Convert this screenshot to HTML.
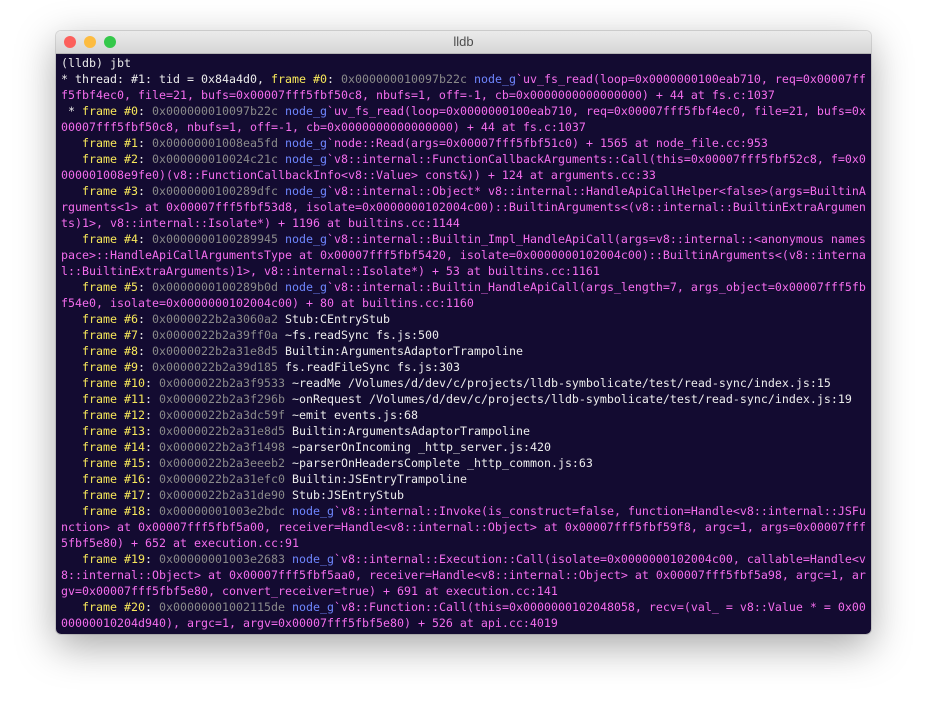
<!DOCTYPE html>
<html><head><meta charset="utf-8"><style>
body{margin:0;width:927px;height:714px;background:#fff;position:relative;overflow:hidden}
.win{position:absolute;left:56px;top:31px;width:815px;height:603px;border-radius:5px;overflow:hidden;box-shadow:0 12px 40px rgba(0,0,0,.35),0 0 0 1px rgba(0,0,0,.12)}
.tb{height:22px;background:linear-gradient(#ebebeb,#d6d6d6);border-bottom:1px solid #b5b5b5;position:relative;font:13px "Liberation Sans",sans-serif;color:#4d4d4d;text-align:center;line-height:22px}
.d{position:absolute;top:5px;width:12px;height:12px;border-radius:50%}
.term{background:#130b31;height:580px;padding:1px 0 0 5px;font:11.63px/16px "DejaVu Sans Mono",monospace;color:#ececec;white-space:pre}
.y{color:#f8e85a}.g{color:#8a8a8a}.b{color:#6f86ff}.p{color:#f46ded}
</style></head><body><div class="win"><div class="tb"><span class="d" style="left:8px;background:#fc605c"></span><span class="d" style="left:28px;background:#fdbc40"></span><span class="d" style="left:48px;background:#34c84a"></span>lldb</div><div class="term">(lldb) jbt
* thread: #1: tid = 0x84a4d0, <span class="y">frame #0</span>: <span class="g">0x000000010097b22c</span> <span class="b">node_g</span><span class="p">`uv_fs_read(loop=0x0000000100eab710, req=0x00007ff
f5fbf4ec0, file=21, bufs=0x00007fff5fbf50c8, nbufs=1, off=-1, cb=0x0000000000000000) + 44 at fs.c:1037</span>
 * <span class="y">frame #0</span>: <span class="g">0x000000010097b22c</span> <span class="b">node_g</span><span class="p">`uv_fs_read(loop=0x0000000100eab710, req=0x00007fff5fbf4ec0, file=21, bufs=0x
00007fff5fbf50c8, nbufs=1, off=-1, cb=0x0000000000000000) + 44 at fs.c:1037</span>
   <span class="y">frame #1</span>: <span class="g">0x00000001008ea5fd</span> <span class="b">node_g</span><span class="p">`node::Read(args=0x00007fff5fbf51c0) + 1565 at node_file.cc:953</span>
   <span class="y">frame #2</span>: <span class="g">0x000000010024c21c</span> <span class="b">node_g</span><span class="p">`v8::internal::FunctionCallbackArguments::Call(this=0x00007fff5fbf52c8, f=0x0
000001008e9fe0)(v8::FunctionCallbackInfo&lt;v8::Value&gt; const&amp;)) + 124 at arguments.cc:33</span>
   <span class="y">frame #3</span>: <span class="g">0x0000000100289dfc</span> <span class="b">node_g</span><span class="p">`v8::internal::Object* v8::internal::HandleApiCallHelper&lt;false&gt;(args=BuiltinA
rguments&lt;1&gt; at 0x00007fff5fbf53d8, isolate=0x0000000102004c00)::BuiltinArguments&lt;(v8::internal::BuiltinExtraArgumen
ts)1&gt;, v8::internal::Isolate*) + 1196 at builtins.cc:1144</span>
   <span class="y">frame #4</span>: <span class="g">0x0000000100289945</span> <span class="b">node_g</span><span class="p">`v8::internal::Builtin_Impl_HandleApiCall(args=v8::internal::&lt;anonymous names
pace&gt;::HandleApiCallArgumentsType at 0x00007fff5fbf5420, isolate=0x0000000102004c00)::BuiltinArguments&lt;(v8::interna
l::BuiltinExtraArguments)1&gt;, v8::internal::Isolate*) + 53 at builtins.cc:1161</span>
   <span class="y">frame #5</span>: <span class="g">0x0000000100289b0d</span> <span class="b">node_g</span><span class="p">`v8::internal::Builtin_HandleApiCall(args_length=7, args_object=0x00007fff5fb
f54e0, isolate=0x0000000102004c00) + 80 at builtins.cc:1160</span>
   <span class="y">frame #6</span>: <span class="g">0x0000022b2a3060a2</span> Stub:CEntryStub
   <span class="y">frame #7</span>: <span class="g">0x0000022b2a39ff0a</span> ~fs.readSync fs.js:500
   <span class="y">frame #8</span>: <span class="g">0x0000022b2a31e8d5</span> Builtin:ArgumentsAdaptorTrampoline
   <span class="y">frame #9</span>: <span class="g">0x0000022b2a39d185</span> fs.readFileSync fs.js:303
   <span class="y">frame #10</span>: <span class="g">0x0000022b2a3f9533</span> ~readMe /Volumes/d/dev/c/projects/lldb-symbolicate/test/read-sync/index.js:15
   <span class="y">frame #11</span>: <span class="g">0x0000022b2a3f296b</span> ~onRequest /Volumes/d/dev/c/projects/lldb-symbolicate/test/read-sync/index.js:19
   <span class="y">frame #12</span>: <span class="g">0x0000022b2a3dc59f</span> ~emit events.js:68
   <span class="y">frame #13</span>: <span class="g">0x0000022b2a31e8d5</span> Builtin:ArgumentsAdaptorTrampoline
   <span class="y">frame #14</span>: <span class="g">0x0000022b2a3f1498</span> ~parserOnIncoming _http_server.js:420
   <span class="y">frame #15</span>: <span class="g">0x0000022b2a3eeeb2</span> ~parserOnHeadersComplete _http_common.js:63
   <span class="y">frame #16</span>: <span class="g">0x0000022b2a31efc0</span> Builtin:JSEntryTrampoline
   <span class="y">frame #17</span>: <span class="g">0x0000022b2a31de90</span> Stub:JSEntryStub
   <span class="y">frame #18</span>: <span class="g">0x00000001003e2bdc</span> <span class="b">node_g</span><span class="p">`v8::internal::Invoke(is_construct=false, function=Handle&lt;v8::internal::JSFu
nction&gt; at 0x00007fff5fbf5a00, receiver=Handle&lt;v8::internal::Object&gt; at 0x00007fff5fbf59f8, argc=1, args=0x00007fff
5fbf5e80) + 652 at execution.cc:91</span>
   <span class="y">frame #19</span>: <span class="g">0x00000001003e2683</span> <span class="b">node_g</span><span class="p">`v8::internal::Execution::Call(isolate=0x0000000102004c00, callable=Handle&lt;v
8::internal::Object&gt; at 0x00007fff5fbf5aa0, receiver=Handle&lt;v8::internal::Object&gt; at 0x00007fff5fbf5a98, argc=1, ar
gv=0x00007fff5fbf5e80, convert_receiver=true) + 691 at execution.cc:141</span>
   <span class="y">frame #20</span>: <span class="g">0x00000001002115de</span> <span class="b">node_g</span><span class="p">`v8::Function::Call(this=0x0000000102048058, recv=(val_ = v8::Value * = 0x00
00000010204d940), argc=1, argv=0x00007fff5fbf5e80) + 526 at api.cc:4019</span></div></div></body></html>
